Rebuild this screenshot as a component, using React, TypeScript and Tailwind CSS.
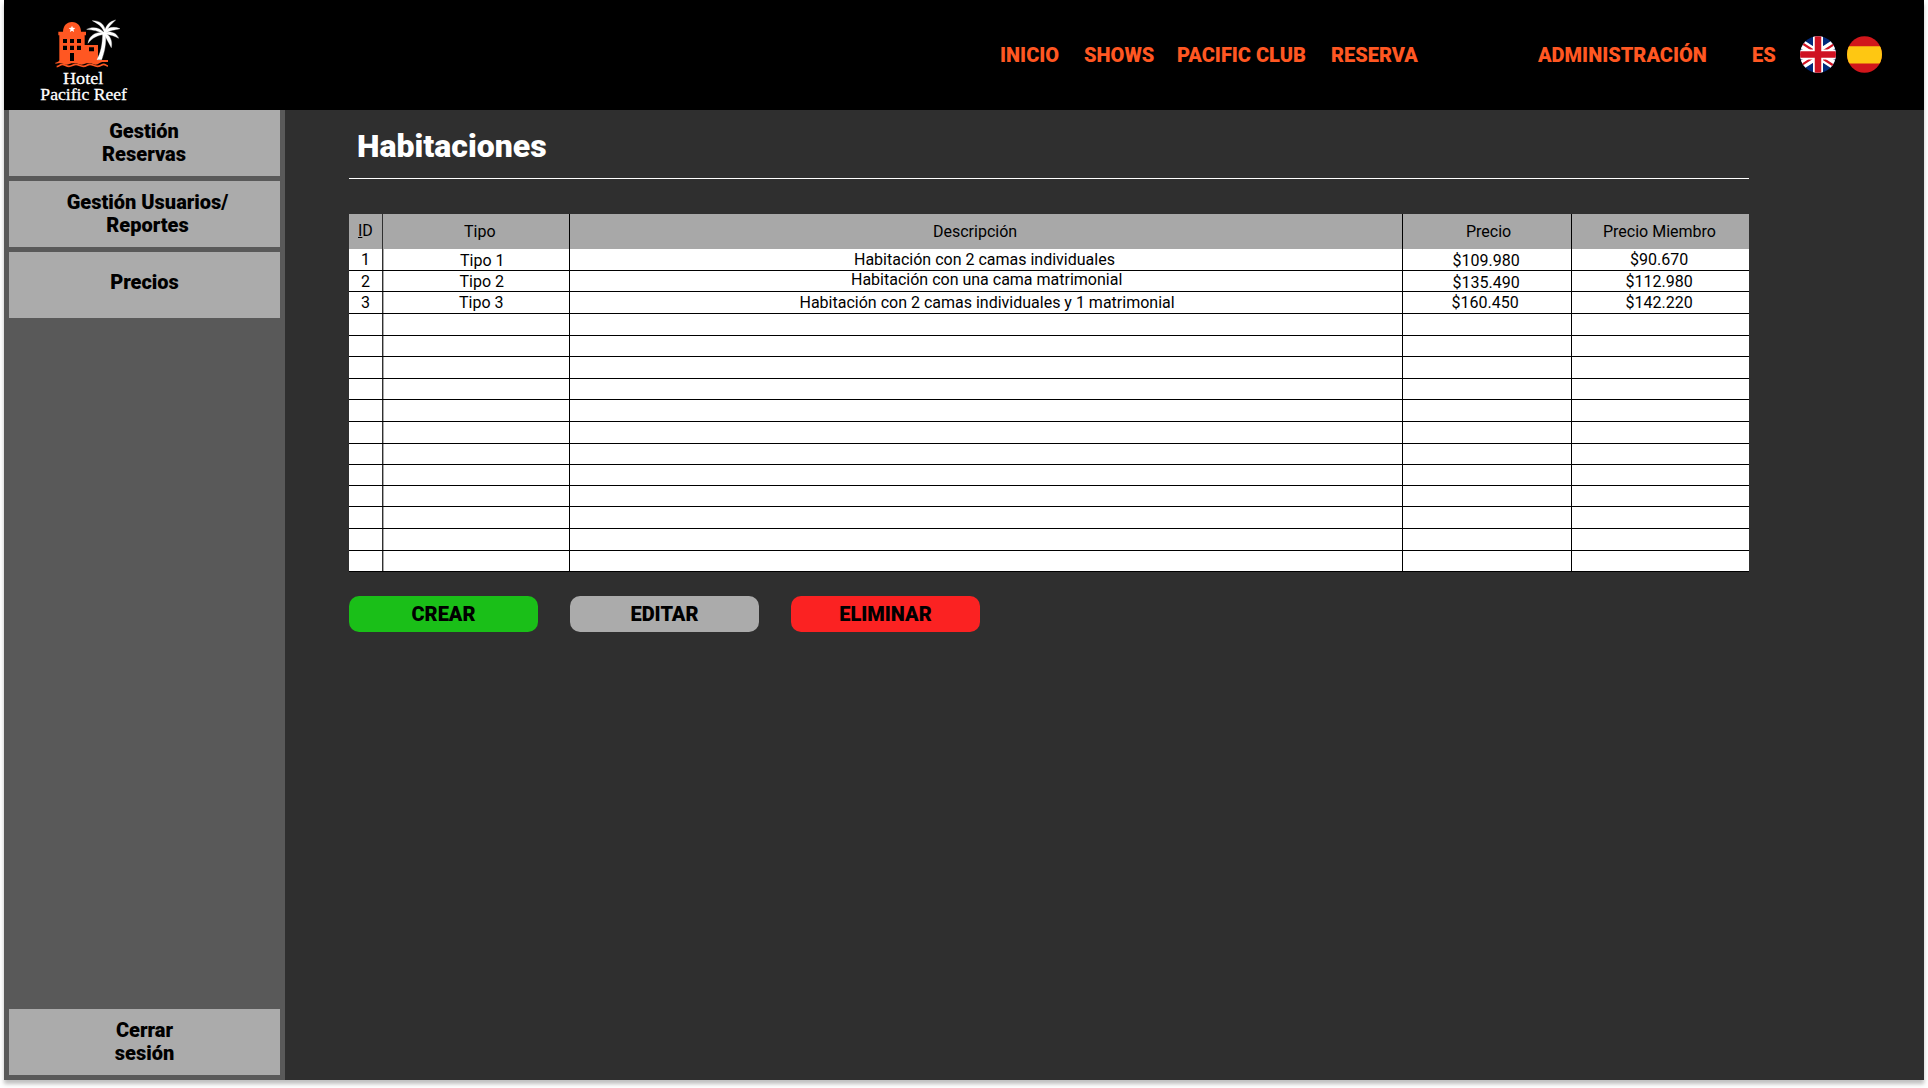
import type { ReactNode } from 'react';

const NAV = [
  { label: 'INICIO', cls: 'w-[84px]' },
  { label: 'SHOWS', cls: 'w-[93px]' },
  { label: 'PACIFIC CLUB', cls: 'w-[154px]' },
  { label: 'RESERVA', cls: 'w-[207px]' },
  { label: 'ADMINISTRACIÓN', cls: 'w-[214px]' },
  { label: 'ES', cls: 'w-[48px]' },
];

type Cell = { text: ReactNode; cls: string };

const HEADER: Cell[] = [
  { text: <><span className="underline">I</span>D</>, cls: 'pl-[9px] pt-[7px]' },
  { text: 'Tipo', cls: 'pl-[81px] pt-[8px]' },
  { text: 'Descripción', cls: 'pl-[363px] pt-[8px]' },
  { text: 'Precio', cls: 'pl-[63px] pt-[8px]' },
  { text: 'Precio Miembro', cls: 'pl-[31px] pt-[8px]' },
];

const ROOMS: Cell[][] = [
  [
    { text: '1', cls: 'pl-[12px] pt-[1px]' },
    { text: 'Tipo 1', cls: 'pl-[77px] pt-[2px]' },
    { text: 'Habitación con 2 camas individuales', cls: 'pl-[284px] pt-[1px]' },
    { text: '$109.980', cls: 'pl-[49.500px] pt-[2px]' },
    { text: '$90.670', cls: 'pl-[58px] pt-[1px]' },
  ],
  [
    { text: '2', cls: 'pl-[12px] pt-[1px]' },
    { text: 'Tipo 2', cls: 'pl-[76.5px] pt-[1px]' },
    { text: 'Habitación con una cama matrimonial', cls: 'pl-[281px] -mt-px' },
    { text: '$135.490', cls: 'pl-[49.5px] pt-[2px]' },
    { text: '$112.980', cls: 'pl-[53.5px] pt-[1px]' },
  ],
  [
    { text: '3', cls: 'pl-[12px] pt-[1px]' },
    { text: 'Tipo 3', cls: 'pl-[76px] pt-[1px]' },
    { text: 'Habitación con 2 camas individuales y 1 matrimonial', cls: 'pl-[229.5px] pt-[1px]' },
    { text: '$160.450', cls: 'pl-[48.5px] pt-[1px]' },
    { text: '$142.220', cls: 'pl-[53.5px] pt-[1px]' },
  ],
];

const ROW_HEIGHTS = [
  'h-[22px]', 'h-[21px]', 'h-[22px]', 'h-[22px]', 'h-[21px]',
  'h-[22px]', 'h-[21px]', 'h-[22px]', 'h-[22px]', 'h-[21px]',
  'h-[21px]', 'h-[21px]', 'h-[22px]', 'h-[22px]', 'h-[21px]',
];

const COLUMN_BORDERS = [
  'border-r border-[#303030] shadow-[1px_0_0_#a8a8a8]',
  'border-r border-black',
  'border-r border-black',
  'border-r border-black',
  '',
];

const COLUMNS = 'grid grid-cols-[34px_187px_833px_169px_177px]';

function Row({ cells, className }: { cells?: Cell[]; className: string }) {
  return (
    <div className={`${COLUMNS} ${className}`}>
      {COLUMN_BORDERS.map((border, i) => (
        <div key={i} className={`min-h-0 ${border}`}>
          {cells && (
            <div className={`h-0 whitespace-nowrap leading-5 ${cells[i].cls}`}>{cells[i].text}</div>
          )}
        </div>
      ))}
    </div>
  );
}

function Logo() {
  return (
    <svg className="block h-[90px] w-[100px]" viewBox="105 48 300 270">
      <g fill="#ff5722">
        <path d="M189 96c0-17 10-30 27-30s27 13 27 30z" />
        <path d="M175 95h83v11h-4v29h40v55H178v-84h-3z" />
        <path d="M166 188c8 0 10-7 19-7s12 7 21 7 13-8 22-8 12 8 21 8 11-8 21-8h54v6h-17c-7 0-11 8-20 8s-14-7-21-7-12 7-22 7-14-7-22-7-13 7-22 7-13-6-18-6-8 3-16 3z" />
      </g>
      <path
        d="M170 200c8 0 10-7 17-7s11 6 20 6 13-6 21-6 12 6 22 6 12-6 20-6 13 6 22 6 13-6 19-6 7 5 13 5"
        fill="none" stroke="#ff5722" strokeWidth="5"
      />
      <path
        d="M189 117h12v12h-12zM210 117h12v12h-12zM231 117h12v12h-12zM189 137h12v13h-12zM210 137h12v13h-12zM231 137h12v13h-12zM210 159h12v24h-12zM267 142h15v12h-15z"
        fill="#000"
      />
      <path d="M216 77l2.700 6.600 7.300.5-5.600 4.700 1.800 7.200-6.200-4-6.200 4 1.800-7.200-5.600-4.700 7.300-.5z" fill="#fff" />
      <g fill="#fff" stroke="#fff" strokeWidth="1">
        <path d="M291 179c10-19 17-43 17-82h8c4 32-3 61-11 82z" />
        <path d="M313 98C309 84 300 74 277 62C300 62 314 72 317 96z" />
        <path d="M313 98C316 78 328 64 347 60C334 72 322 84 318 98z" />
        <path d="M313 98C322 82 340 78 360 86C344 90 330 90 317 100z" />
        <path d="M313 98C332 92 350 98 356 115C344 108 330 104 316 102z" />
        <path d="M313 98C330 104 338 122 334 143C326 128 318 114 312 102z" />
        <path d="M313 98C300 84 280 78 260 88C278 90 296 92 310 102z" />
        <path d="M313 98C290 94 268 104 264 130C278 112 294 106 312 103z" />
      </g>
      <g fill="#fff" stroke="#fff" strokeWidth=".9" fontFamily="'Liberation Serif', serif" fontSize="53">
        <text x="189" y="251" textLength="121" lengthAdjust="spacingAndGlyphs">Hotel</text>
        <text x="121" y="299" textLength="260" lengthAdjust="spacingAndGlyphs">Pacific Reef</text>
      </g>
    </svg>
  );
}

function FlagUK() {
  return (
    <svg className="block h-[37px] w-9" viewBox="0 0 36 37">
      <defs>
        <clipPath id="uk"><ellipse cx="18" cy="18.500" rx="18" ry="18.300" /></clipPath>
      </defs>
      <g clipPath="url(#uk)">
        <path d="M0 0h36v37H0z" fill="#00297a" />
        <path d="M-9 1l54 35M-9 36L45 1" stroke="#fff" strokeWidth="8.500" />
        <path d="M18 17.500L-9 0M18 19.500L45 37M17 19L-10 36.500M19 18L46 .5" stroke="#cf1222" strokeWidth="2.200" />
        <path d="M18 0v37M0 18.500h36" stroke="#fff" strokeWidth="10" />
        <path d="M18 0v37M0 18.500h36" stroke="#cf1222" strokeWidth="6.500" />
      </g>
    </svg>
  );
}

function FlagSpain() {
  return (
    <svg className="block h-[37px] w-[35px]" viewBox="0 0 35 37">
      <defs>
        <clipPath id="es"><ellipse cx="17.500" cy="18.500" rx="17.500" ry="18.300" /></clipPath>
      </defs>
      <g clipPath="url(#es)">
        <path d="M0 0h35v37H0z" fill="#d1161b" />
        <path d="M0 10.300h35v17.200H0z" fill="#fec712" />
      </g>
    </svg>
  );
}

function SideButton({ children, className = '' }: { children: ReactNode; className?: string }) {
  return (
    <button className={`flex h-[66px] w-[271px] shrink-0 justify-center bg-[#ababab] text-center text-xl font-black leading-[23px] text-black ${className}`}>
      {children}
    </button>
  );
}

export default function App() {
  return (
    <div className="h-[1088px] overflow-hidden bg-white px-1 font-['Roboto',sans-serif]">
      <div className="flex h-[1080px] w-[1920px] flex-col bg-[#2f2f2f] shadow-[0_4px_4px_rgba(0,0,0,0.25)]">
        <header className="flex h-[110px] shrink-0 bg-black">
          <div className="pl-[31px] pt-4">
            <Logo />
          </div>
          <nav className="ml-auto flex pt-[43px] text-xl font-black leading-6 text-[#ff5722]">
            {NAV.map((item) => (
              <a key={item.label} className={`whitespace-nowrap ${item.cls}`}>{item.label}</a>
            ))}
          </nav>
          <div className="flex gap-[11px] pr-[42px] pt-9">
            <FlagUK />
            <FlagSpain />
          </div>
        </header>

        <div className="flex min-h-0 flex-1">
          <aside className="flex w-[281px] flex-col gap-[5px] bg-[#595959] px-[5px] pb-[5px]">
            <SideButton className="pr-px pt-[10px]">Gestión<br />Reservas</SideButton>
            <SideButton className="pl-[6px] pt-[10px]">Gestión Usuarios/<br />Reportes</SideButton>
            <SideButton className="pt-[19px]">Precios</SideButton>
            <SideButton className="mt-auto pt-[10px]">Cerrar<br />sesión</SideButton>
          </aside>

          <main className="pl-16">
            <h1 className="h-[69px] w-[1400px] border-b border-white pl-2 pt-4 text-[32px] font-black leading-10 text-white">
              Habitaciones
            </h1>

            <section className="mt-[35px] w-[1400px] bg-white text-base text-black">
              <Row cells={HEADER} className="h-[35px] bg-[#a8a8a8]" />
              {ROW_HEIGHTS.map((height, i) => (
                <Row key={i} cells={ROOMS[i]} className={`border-b border-black ${height}`} />
              ))}
            </section>

            <div className="mt-6 flex gap-8 text-xl font-black text-black">
              <button className="h-9 w-[189px] rounded-[10px] bg-[#1abf18]">CREAR</button>
              <button className="h-9 w-[189px] rounded-[10px] bg-[#ababab]">EDITAR</button>
              <button className="h-9 w-[189px] rounded-[10px] bg-[#fb2222]">ELIMINAR</button>
            </div>
          </main>
        </div>
      </div>
    </div>
  );
}
